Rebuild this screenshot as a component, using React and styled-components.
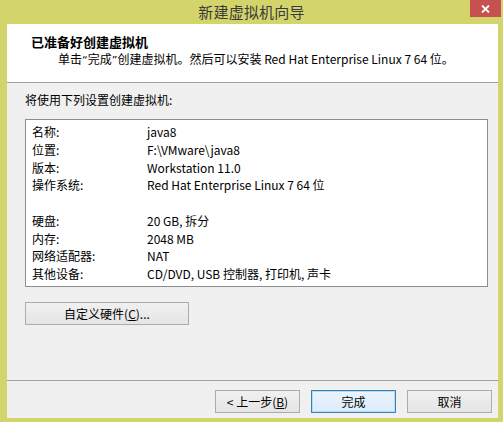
import React from 'react';
import styled, { createGlobalStyle } from 'styled-components';

const GlobalStyle = createGlobalStyle`
  html, body {
    margin: 0;
    padding: 0;
    background: #d3d56b;
  }
  body {
    font-family: "Noto Sans CJK SC", "DejaVu Sans", sans-serif;
    font-size: 12px;
    color: #000;
  }
`;

const Window = styled.div`
  width: 503px;
  height: 422px;
  background: #d3d56b;
  display: flex;
  flex-direction: column;
  box-sizing: border-box;
`;

const TitleBar = styled.div`
  height: 24px;
  display: grid;
  grid-template-columns: 1fr auto 1fr;
  align-items: start;
`;

const Title = styled.div`
  grid-column: 2;
  font-size: 15px;
  line-height: 24px;
  color: #3a3a3a;
  letter-spacing: 0.2px;
`;

const CloseButton = styled.div`
  grid-column: 3;
  justify-self: end;
  margin-right: 2px;
  width: 31px;
  height: 17px;
  background: #c75050;
  display: flex;
  align-items: center;
  justify-content: center;
`;

const Client = styled.div`
  flex: 1;
  margin: 0 5px 4px 7px;
  background: #f0f0f0;
  display: flex;
  flex-direction: column;
  min-height: 0;
`;

const Header = styled.div`
  background: #fff;
  border-bottom: 1px solid #a0a0a0;
  padding: 9px 0 0 24px;
  box-sizing: border-box;
  height: 59px;
`;

const Heading = styled.div`
  font-weight: bold;
  font-size: 13px;
  line-height: 17px;
`;

const Subtitle = styled.div`
  margin-left: 27px;
  line-height: 17px;
`;

/* narrow Latin-width quote marks, as the dialog font draws them */
const Quote = styled.span`
  font-family: "DejaVu Sans", sans-serif;
  font-size: 11px;
`;

const Body = styled.div`
  flex: 1;
  display: flex;
  flex-direction: column;
  padding: 9px 10px 0 18px;
`;

const Caption = styled.div`
  line-height: 16px;
`;

const SummaryBox = styled.div`
  margin-top: 11px;
  background: #fff;
  border: 1px solid #8c8c8c;
  padding: 3px 0 0 6px;
  box-sizing: border-box;
  height: 168px;
`;

const Row = styled.div`
  display: grid;
  grid-template-columns: 115px 1fr;
  line-height: 17.75px;
  height: 17.75px;
`;

const Button = styled.button`
  font-family: inherit;
  font-size: 12px;
  color: #000;
  width: ${p => p.$width || 85}px;
  height: 23px;
  padding: 0;
  box-sizing: border-box;
  border: 1px solid ${p => (p.$default ? '#3c7fb1' : '#acacac')};
  background: ${p =>
    p.$default
      ? 'linear-gradient(#eaf4fc, #dcecfc)'
      : 'linear-gradient(#f0f0f0, #e5e5e5)'};
  box-shadow: ${p => (p.$default ? 'inset 0 0 0 1px #b7dcf6' : 'none')};
  line-height: 20px;
`;

const CustomizeButton = styled(Button)`
  margin-top: 15px;
`;

const Key = styled.span`
  text-decoration: underline;
`;

const Footer = styled.div`
  border-top: 1px solid #a0a0a0;
  height: 38px;
  box-sizing: border-box;
  display: flex;
  justify-content: flex-end;
  align-items: flex-start;
  gap: 11px;
  padding: 9px 6px 0 0;
`;

const summary = [
  ['名称:', 'java8'],
  ['位置:', 'F:\\VMware\\java8'],
  ['版本:', 'Workstation 11.0'],
  ['操作系统:', 'Red Hat Enterprise Linux 7 64 位'],
  ['', ''],
  ['硬盘:', '20 GB, 拆分'],
  ['内存:', '2048 MB'],
  ['网络适配器:', 'NAT'],
  ['其他设备:', 'CD/DVD, USB 控制器, 打印机, 声卡'],
];

export default function App() {
  return (
    <>
      <GlobalStyle />
      <Window>
        <TitleBar>
          <Title>新建虚拟机向导</Title>
          <CloseButton>
            <svg width="9" height="8" viewBox="0 0 9 8">
              <path d="M1 0.5 L8 7.5 M8 0.5 L1 7.5" stroke="#fff" strokeWidth="1.8" />
            </svg>
          </CloseButton>
        </TitleBar>
        <Client>
          <Header>
            <Heading>已准备好创建虚拟机</Heading>
            <Subtitle>
              单击<Quote>“</Quote>完成<Quote>”</Quote>创建虚拟机。然后可以安装 Red Hat Enterprise Linux 7 64 位。
            </Subtitle>
          </Header>
          <Body>
            <Caption>将使用下列设置创建虚拟机:</Caption>
            <SummaryBox>
              {summary.map(([label, value], i) => (
                <Row key={i}>
                  <span>{label}</span>
                  <span>{value}</span>
                </Row>
              ))}
            </SummaryBox>
            <CustomizeButton $width={164}>
              自定义硬件(<Key>C</Key>)...
            </CustomizeButton>
          </Body>
          <Footer>
            <Button>&lt; 上一步(<Key>B</Key>)</Button>
            <Button $default>完成</Button>
            <Button>取消</Button>
          </Footer>
        </Client>
      </Window>
    </>
  );
}
